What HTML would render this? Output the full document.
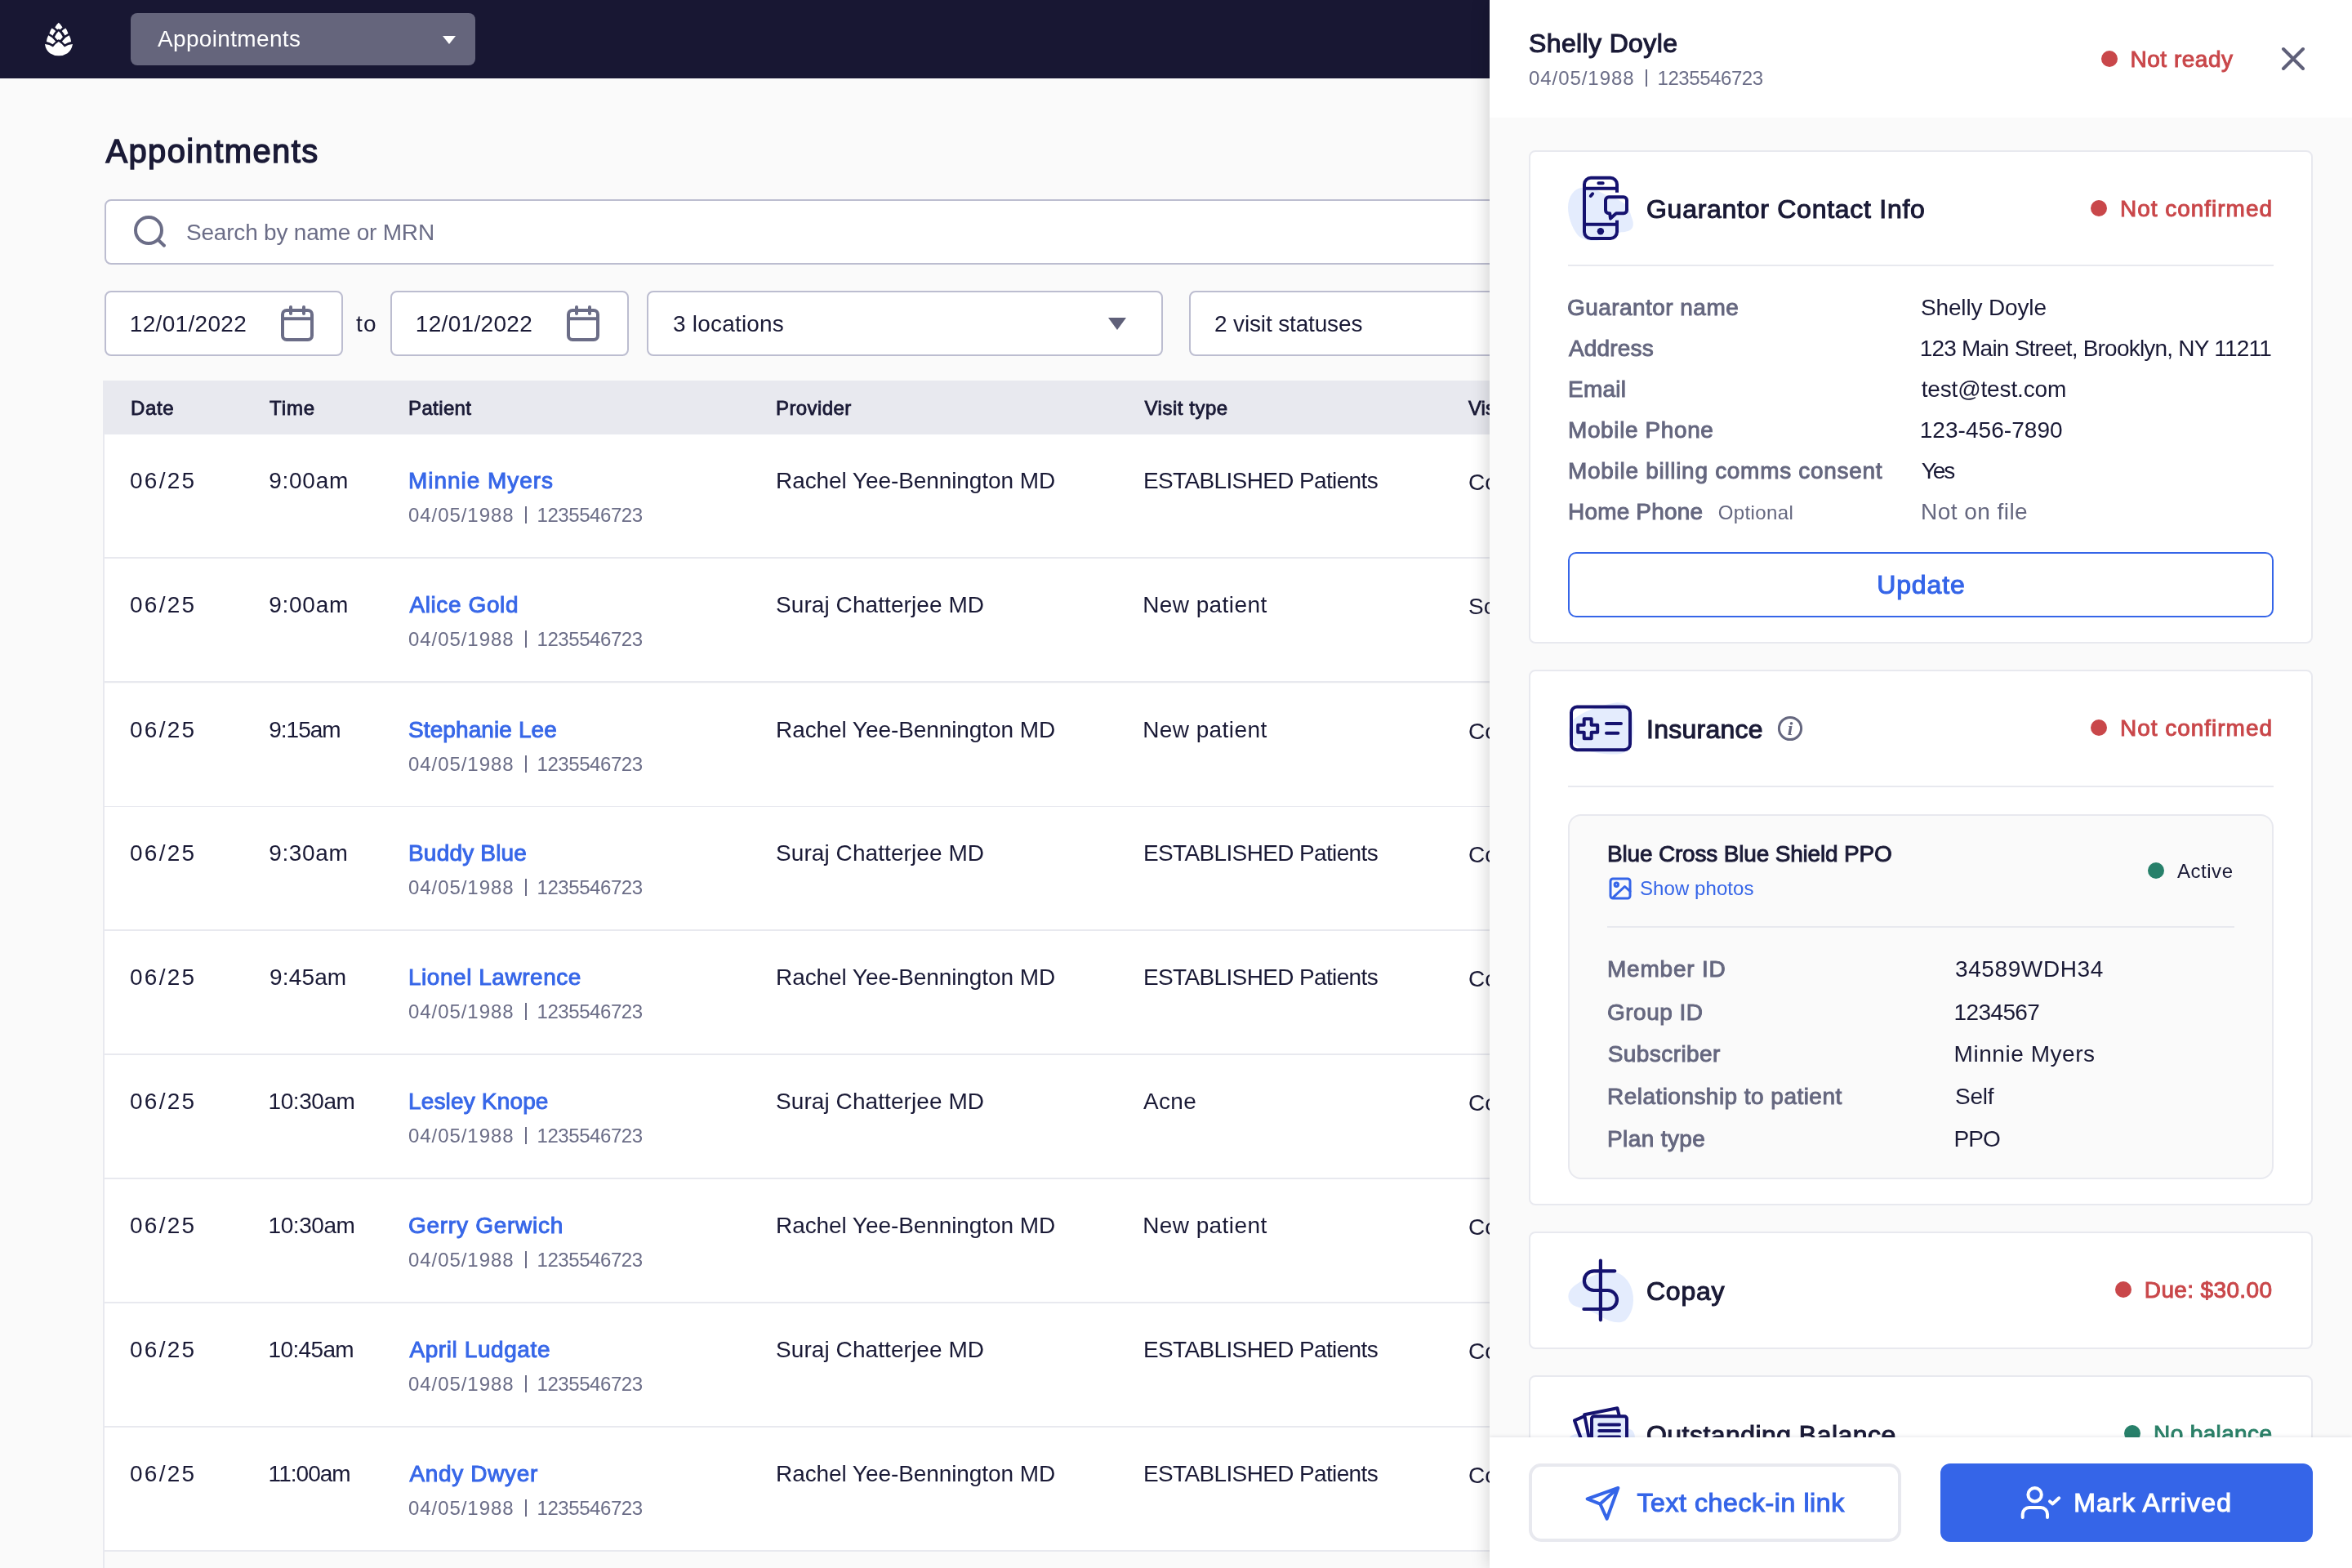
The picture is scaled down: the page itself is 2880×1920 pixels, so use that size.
<!DOCTYPE html>
<html lang="en">
<head>
<meta charset="utf-8">
<title>Appointments</title>
<style>
*{box-sizing:border-box;margin:0;padding:0}
html,body{width:2880px;height:1920px;overflow:hidden;background:#fafafa}
body{font-family:"Liberation Sans",Arial,sans-serif;font-size:28px;color:#1a1a36;position:relative;-webkit-font-smoothing:antialiased}
.abs{position:absolute}
b,.b,.m{font-weight:400;-webkit-text-stroke:0.034em currentColor}
/* nav */
#nav{position:absolute;left:0;top:0;width:2880px;height:96px;background:#181733}
#navsel{position:absolute;left:160px;top:16px;width:422px;height:64px;border-radius:8px;background:#65657c;color:#fff;font-size:28px;line-height:64px;padding-left:33px;overflow:hidden}
#navsel i{position:absolute;left:382px;top:28px;width:0;height:0;border-left:8px solid transparent;border-right:8px solid transparent;border-top:10px solid #fff}
/* main */
h1{position:absolute;left:128px;top:159px;font-size:40px;line-height:52px;font-weight:400;-webkit-text-stroke:0.034em currentColor;color:#1a1a36}
.inp{position:absolute;height:80px;border:2px solid #bcbdd0;border-radius:8px;background:#fff;line-height:78px;font-size:28px;padding-left:30px;white-space:nowrap;overflow:hidden}
#search{left:128px;top:244px;width:1800px;color:#6b6d87;padding-left:98px}
.caret{position:absolute;width:0;height:0;border-left:11px solid transparent;border-right:11px solid transparent;border-top:15px solid #5f6079}
/* table */
#tbl{position:absolute;left:126px;top:466px;width:1800px;height:1500px;border-left:2px solid #e8e9ef;background:#fafafa}
#thead{position:absolute;left:-2px;top:0;width:1800px;height:66px;background:#e8e9ef;font-size:24px;font-weight:400;-webkit-text-stroke:0.034em currentColor;line-height:67px;overflow:hidden}
#thead>span{position:absolute;top:0}
.row{position:absolute;left:0;width:1800px;height:152px;background:#fff;border-bottom:2px solid #e8e9ef}
.row>span{position:absolute;top:37px;line-height:40px;white-space:nowrap}
.row .c1{left:32px}.row .c2{left:202px}.row .c3{left:372px;color:#3767e8;font-weight:400;-webkit-text-stroke:0.034em currentColor}
.row .c4{left:822px}.row .c5{left:1272px}.row .c6{left:1670px;top:39px}
.row .sub{left:372px;top:81px;font-size:24px;line-height:36px;color:#6b6d87}
.sep{display:inline-block;width:2px;height:21px;background:#6b6d87;vertical-align:-2px;margin:0 13px 0 13px}
/* panel */
#panel{position:absolute;left:1824px;top:0;width:1056px;height:1920px;background:#fafafa;box-shadow:0 0 22px rgba(0,0,0,.2);overflow:hidden}
#phead{position:absolute;left:0;top:0;width:1056px;height:144px;background:#fff}
.card{position:absolute;left:48px;width:960px;background:#fff;border:2px solid #e8e9ef;border-radius:8px}
.ctitle{position:absolute;left:142px;font-size:32px;font-weight:400;-webkit-text-stroke:0.034em currentColor;line-height:40px;white-space:nowrap}
.stat{position:absolute;right:48px;font-size:28px;font-weight:400;-webkit-text-stroke:0.034em currentColor;line-height:40px;white-space:nowrap;color:#c9474a}
.dot{display:inline-block;width:20px;height:20px;border-radius:50%;background:#c9474a;margin-right:16px;vertical-align:0}
.green{color:#2b8068}.green .dot,.dot.g{background:#27806a}
.hr{position:absolute;left:46px;width:864px;height:2px;background:#e8e9ef}
.lab{position:absolute;left:46px;font-weight:400;-webkit-text-stroke:0.034em currentColor;color:#65677f;line-height:40px;white-space:nowrap}
.val{position:absolute;left:478px;line-height:40px;white-space:nowrap}
#pfoot{position:absolute;left:0;top:1760px;width:1056px;height:160px;background:#fff;box-shadow:0 -1px 4px rgba(24,23,51,.10)}
.btn{position:absolute;top:32px;width:456px;height:96px;border-radius:12px;font-size:32px;font-weight:400;-webkit-text-stroke:0.034em currentColor;line-height:96px;white-space:nowrap}
.opt{font-weight:400;-webkit-text-stroke:0;font-size:24px;margin-left:17px}
.upd{position:absolute;left:46px;top:490px;width:864px;height:80px;border:2px solid #3565e8;border-radius:10px;color:#3565e8;font-size:32px;font-weight:400;-webkit-text-stroke:0.034em currentColor;text-align:center;line-height:76px}
.ibox{position:absolute;left:46px;top:175px;width:864px;height:447px;border:2px solid #e8e9ef;border-radius:16px;background:#fafafa}
.v2{left:472px}
@media (max-width:1600px){html{zoom:.5}}
</style>
</head>
<body style="will-change:transform">
<div id="nav">
<svg class="abs" style="left:40px;top:16px" width="64" height="64" viewBox="0 0 64 64" fill="#fff">
<path d="M31.8 11.8Q34.6 14 36.5 17.6L33.7 20.2L31.8 19.2L30.2 20.2L27.3 17.6Q29.2 14 31.8 11.8Z"/>
<path d="M23.5 18.4Q26 19.6 28.2 22Q26 24.6 24.5 27.8Q22.6 26 20.4 24.9Q21.4 21 23.5 18.4Z"/>
<path d="M40.4 18.4Q37.8 19.6 35.7 22Q38 24.6 39.4 27.4Q41.4 26 43.5 24.9Q42.4 21 40.4 18.4Z"/>
<path d="M31.8 22.2Q35.2 25 36.9 29.2L33.7 33.1L31.8 32.2L30.2 33.1L26.9 29.2Q28.6 25 31.8 22.2Z"/>
<path d="M19.2 27.3Q24.6 29.6 28.2 34.7L24.5 38.2Q21 36 16.9 35.1Q17.4 30.6 19.2 27.3Z"/>
<path d="M44.7 27.3Q39.4 29.6 35.9 34.7L39.4 38.2Q43 36 47.1 35.1Q46.6 30.6 44.7 27.3Z"/>
<path d="M14.9 38Q20.6 38.4 24.9 41.6Q27.8 37.6 31.8 35.1Q36 37.6 39 41.6Q43.4 38.4 49 38Q47.6 45.6 42.6 49.2Q37.6 52.4 31.9 52.2Q26.2 52.4 21.2 49.2Q16.2 45.6 14.9 38Z"/>
</svg>
<div id="navsel"><span style="letter-spacing:0.34px">Appointments</span><i></i></div>
</div>

<h1><span style="letter-spacing:1.38px;margin-left:1.4px">Appointments</span></h1>

<div class="inp" id="search"><span style="letter-spacing:-0.2px">Search by name or MRN</span><svg class="abs" style="left:30px;top:14px" width="48" height="48" viewBox="0 0 48 48" fill="none" stroke="#6b6d87" stroke-width="4" stroke-linecap="round"><circle cx="22" cy="22" r="16"/><path d="M33.5 33.5L41 40.7"/></svg>
</div>

<div class="inp" style="left:128px;top:356px;width:292px"><span style="letter-spacing:0.31px;margin-left:-1.2px">12/01/2022</span><svg class="abs" style="left:210px;top:12px" width="48" height="52" viewBox="0 0 48 52" fill="none" stroke="#6b6d87" stroke-width="4" stroke-linecap="round"><rect x="6" y="10" width="36" height="36" rx="5"/><path d="M6 20.3H42M16 6V14M32 6V14"/></svg>
</div>
<div class="abs" style="left:436px;top:357px;line-height:80px;font-size:28px"><span style="letter-spacing:1.1px">to</span></div>
<div class="inp" style="left:478px;top:356px;width:292px"><span style="letter-spacing:0.31px;margin-left:-1.2px">12/01/2022</span><svg class="abs" style="left:210px;top:12px" width="48" height="52" viewBox="0 0 48 52" fill="none" stroke="#6b6d87" stroke-width="4" stroke-linecap="round"><rect x="6" y="10" width="36" height="36" rx="5"/><path d="M6 20.3H42M16 6V14M32 6V14"/></svg>
</div>
<div class="inp" style="left:792px;top:356px;width:632px"><span style="letter-spacing:0.2px">3 locations</span><i class="caret" style="left:563px;top:31px"></i></div>
<div class="inp" style="left:1456px;top:356px;width:500px"><span style="letter-spacing:-0.15px;margin-left:-1px">2 visit statuses</span></div>

<div id="tbl">
<div id="thead"><span style="left:34px"><span style="letter-spacing:0.67px">Date</span></span><span style="left:204px"><span style="letter-spacing:0.9px">Time</span></span><span style="left:374px"><span style="letter-spacing:0.38px">Patient</span></span><span style="left:824px"><span style="letter-spacing:0.4px">Provider</span></span><span style="left:1274px"><span style="letter-spacing:0.53px;margin-left:1.5px">Visit type</span></span><span style="left:1672px">Visit status</span></div>
<div class="row" style="top:66px"><span class="c1"><span style="letter-spacing:2.27px;margin-left:-1px">06/25</span></span><span class="c2"><span style="letter-spacing:0.74px;margin-left:-0.8px">9:00am</span></span><span class="c3"><span style="letter-spacing:0.95px">Minnie Myers</span></span><span class="sub"><span style="letter-spacing:0.94px">04/05/1988</span><i class="sep"></i><span style="letter-spacing:-0.44px">1235546723</span></span><span class="c4"><span style="letter-spacing:-0.08px">Rachel Yee-Bennington MD</span></span><span class="c5"><span style="letter-spacing:-0.64px">ESTABLISHED Patients</span></span><span class="c6">Confirmed</span></div>
<div class="row" style="top:218px"><span class="c1"><span style="letter-spacing:2.27px;margin-left:-1px">06/25</span></span><span class="c2"><span style="letter-spacing:0.74px;margin-left:-0.8px">9:00am</span></span><span class="c3"><span style="letter-spacing:0.61px;margin-left:1.4px">Alice Gold</span></span><span class="sub"><span style="letter-spacing:0.94px">04/05/1988</span><i class="sep"></i><span style="letter-spacing:-0.44px">1235546723</span></span><span class="c4"><span style="letter-spacing:0.08px">Suraj Chatterjee MD</span></span><span class="c5"><span style="letter-spacing:0.41px;margin-left:-0.8px">New patient</span></span><span class="c6">Scheduled</span></div>
<div class="row" style="top:371px"><span class="c1"><span style="letter-spacing:2.27px;margin-left:-1px">06/25</span></span><span class="c2"><span style="letter-spacing:-0.98px;margin-left:-0.8px">9:15am</span></span><span class="c3"><span style="letter-spacing:0.1px">Stephanie Lee</span></span><span class="sub"><span style="letter-spacing:0.94px">04/05/1988</span><i class="sep"></i><span style="letter-spacing:-0.44px">1235546723</span></span><span class="c4"><span style="letter-spacing:-0.08px">Rachel Yee-Bennington MD</span></span><span class="c5"><span style="letter-spacing:0.41px;margin-left:-0.8px">New patient</span></span><span class="c6">Confirmed</span></div>
<div class="row" style="top:522px"><span class="c1"><span style="letter-spacing:2.27px;margin-left:-1px">06/25</span></span><span class="c2"><span style="letter-spacing:0.66px;margin-left:-0.8px">9:30am</span></span><span class="c3"><span style="letter-spacing:0.19px">Buddy Blue</span></span><span class="sub"><span style="letter-spacing:0.94px">04/05/1988</span><i class="sep"></i><span style="letter-spacing:-0.44px">1235546723</span></span><span class="c4"><span style="letter-spacing:0.08px">Suraj Chatterjee MD</span></span><span class="c5"><span style="letter-spacing:-0.64px">ESTABLISHED Patients</span></span><span class="c6">Confirmed</span></div>
<div class="row" style="top:674px"><span class="c1"><span style="letter-spacing:2.27px;margin-left:-1px">06/25</span></span><span class="c2"><span style="letter-spacing:0.16px">9:45am</span></span><span class="c3"><span style="letter-spacing:0.53px">Lionel Lawrence</span></span><span class="sub"><span style="letter-spacing:0.94px">04/05/1988</span><i class="sep"></i><span style="letter-spacing:-0.44px">1235546723</span></span><span class="c4"><span style="letter-spacing:-0.08px">Rachel Yee-Bennington MD</span></span><span class="c5"><span style="letter-spacing:-0.64px">ESTABLISHED Patients</span></span><span class="c6">Confirmed</span></div>
<div class="row" style="top:826px"><span class="c1"><span style="letter-spacing:2.27px;margin-left:-1px">06/25</span></span><span class="c2"><span style="letter-spacing:-0.45px;margin-left:-1.4px">10:30am</span></span><span class="c3"><span style="letter-spacing:0.16px">Lesley Knope</span></span><span class="sub"><span style="letter-spacing:0.94px">04/05/1988</span><i class="sep"></i><span style="letter-spacing:-0.44px">1235546723</span></span><span class="c4"><span style="letter-spacing:0.08px">Suraj Chatterjee MD</span></span><span class="c5"><span style="letter-spacing:0.3px">Acne</span></span><span class="c6">Confirmed</span></div>
<div class="row" style="top:978px"><span class="c1"><span style="letter-spacing:2.27px;margin-left:-1px">06/25</span></span><span class="c2"><span style="letter-spacing:-0.45px;margin-left:-1.4px">10:30am</span></span><span class="c3"><span style="letter-spacing:0.73px">Gerry Gerwich</span></span><span class="sub"><span style="letter-spacing:0.94px">04/05/1988</span><i class="sep"></i><span style="letter-spacing:-0.44px">1235546723</span></span><span class="c4"><span style="letter-spacing:-0.08px">Rachel Yee-Bennington MD</span></span><span class="c5"><span style="letter-spacing:0.41px;margin-left:-0.8px">New patient</span></span><span class="c6">Confirmed</span></div>
<div class="row" style="top:1130px"><span class="c1"><span style="letter-spacing:2.27px;margin-left:-1px">06/25</span></span><span class="c2"><span style="letter-spacing:-0.65px;margin-left:-1.4px">10:45am</span></span><span class="c3"><span style="letter-spacing:0.59px;margin-left:1.4px">April Ludgate</span></span><span class="sub"><span style="letter-spacing:0.94px">04/05/1988</span><i class="sep"></i><span style="letter-spacing:-0.44px">1235546723</span></span><span class="c4"><span style="letter-spacing:0.08px">Suraj Chatterjee MD</span></span><span class="c5"><span style="letter-spacing:-0.64px">ESTABLISHED Patients</span></span><span class="c6">Confirmed</span></div>
<div class="row" style="top:1282px"><span class="c1"><span style="letter-spacing:2.27px;margin-left:-1px">06/25</span></span><span class="c2"><span style="letter-spacing:-0.97px;margin-left:-1.4px">11:00am</span></span><span class="c3"><span style="letter-spacing:0.67px;margin-left:1.4px">Andy Dwyer</span></span><span class="sub"><span style="letter-spacing:0.94px">04/05/1988</span><i class="sep"></i><span style="letter-spacing:-0.44px">1235546723</span></span><span class="c4"><span style="letter-spacing:-0.08px">Rachel Yee-Bennington MD</span></span><span class="c5"><span style="letter-spacing:-0.64px">ESTABLISHED Patients</span></span><span class="c6">Confirmed</span></div>
</div>

<div id="panel">
<div class="card" style="top:184px;height:604px">
<svg class="abs" style="left:42px;top:22px" width="88" height="92" viewBox="0 0 88 92" fill="none" stroke="#15126f" stroke-width="4">
<path d="M20 22C32 20 44 27 50 30.5C58 33 68 37 74 42C79 47 80 52 81.5 57C84 63 85 68 82 72C79 76 72 76 68 76.5C62 78 60 82 50 85C38 88 24 88 16 80C8 70 4 56 4 46C4 32 12 23 20 22Z" fill="#e4ecfd" stroke="none"/>
<path d="M64 27.8V17.7a8 8 0 0 0-8-8H32a8 8 0 0 0-8 8V76a8 8 0 0 0 8 8H56a8 8 0 0 0 8-8V61.8M24 22.8H64M24 66.8H64"/>
<path d="M41.4 16.3H46.7M34.1 29.3L31.8 32" stroke-linecap="round"/>
<circle cx="43.9" cy="75.2" r="4.2" fill="#15126f" stroke="none"/>
<path d="M54 33.2H72a4 4 0 0 1 4 4V49.3a4 4 0 0 1-4 4H63L56 59.6L55.2 53.3H54a4 4 0 0 1-4-4V37.2a4 4 0 0 1 4-4Z" stroke-linejoin="round"/>
</svg>
<div class="ctitle" style="top:50px"><span style="letter-spacing:0.73px">Guarantor Contact Info</span></div>
<div class="stat" style="top:50px"><i class="dot"></i><span style="letter-spacing:0.97px;margin-right:-0.97px">Not confirmed</span></div>
<div class="hr" style="top:138px"></div>
<div class="lab" style="top:171px"><span style="letter-spacing:0.45px;margin-left:-1px">Guarantor name</span></div><div class="val" style="top:171px"><span style="letter-spacing:-0.15px">Shelly Doyle</span></div>
<div class="lab" style="top:221px"><span style="letter-spacing:0.17px;margin-left:1px">Address</span></div><div class="val" style="top:221px"><span style="letter-spacing:-0.78px;margin-left:-1.3px">123 Main Street, Brooklyn, NY 11211</span></div>
<div class="lab" style="top:271px"><span style="letter-spacing:0.23px">Email</span></div><div class="val" style="top:271px"><span style="letter-spacing:-0.15px;margin-left:0.7px">test@test.com</span></div>
<div class="lab" style="top:321px"><span style="letter-spacing:0.61px">Mobile Phone</span></div><div class="val" style="top:321px"><span style="letter-spacing:0.05px;margin-left:-1.3px">123-456-7890</span></div>
<div class="lab" style="top:371px"><span style="letter-spacing:0.7px">Mobile billing comms consent</span></div><div class="val" style="top:371px"><span style="letter-spacing:-2.0px;margin-left:0.7px">Yes</span></div>
<div class="lab" style="top:421px"><span style="letter-spacing:0.18px">Home Phone</span><span class="opt"><span style="letter-spacing:0.36px;margin-left:1.6px">Optional</span></span></div><div class="val" style="top:421px;color:#65677f"><span style="letter-spacing:0.46px">Not on file</span></div>
<div class="upd"><span style="letter-spacing:0.9px;margin-right:-0.9px">Update</span></div>
</div>

<div class="card" style="top:820px;height:656px">
<svg class="abs" style="left:42px;top:34px" width="88" height="72" viewBox="0 0 88 72" fill="none" stroke="#15126f" stroke-width="4" stroke-linecap="round" stroke-linejoin="round">
<path d="M5 42C5 34 8 27 12 24C22 16 40 8 62 4.5C72 3 80 8 82 16C85 28 85 44 82 54C80 62 74 67 64 67.5C52 68 36 66 24 62C14 58 5 52 5 42Z" fill="#e4ecfd" stroke="none"/>
<rect x="8" y="9.6" width="72" height="52.6" rx="7"/>
<path d="M23.7 24.2h9v7.5h7.5v9h-7.5v7.5h-9v-7.5h-7.5v-9h7.5ZM51 30.1H69M51 41.7H65.3"/>
</svg>
<div class="ctitle" style="top:51px"><span style="letter-spacing:0.26px">Insurance</span></div>
<svg class="abs" style="left:300px;top:52px" width="36" height="36" viewBox="0 0 36 36"><circle cx="18" cy="18" r="13.6" fill="none" stroke="#65677f" stroke-width="3"/><text x="18" y="25.5" text-anchor="middle" font-family="Liberation Serif,serif" font-style="italic" font-weight="700" font-size="24" fill="#65677f">i</text></svg>
<div class="stat" style="top:50px"><i class="dot"></i><span style="letter-spacing:0.97px;margin-right:-0.97px">Not confirmed</span></div>
<div class="hr" style="top:140px"></div>
<div class="ibox">
<div class="abs b" style="left:46px;top:27px;line-height:40px;white-space:nowrap"><span style="letter-spacing:-0.18px">Blue Cross Blue Shield PPO</span></div>
<svg class="abs" style="left:46px;top:73px" width="32" height="32" viewBox="0 0 32 32" fill="none" stroke="#3565e8" stroke-width="3" stroke-linecap="round" stroke-linejoin="round"><rect x="4" y="4" width="24" height="24" rx="3"/><circle cx="11.3" cy="11.3" r="2.2"/><path d="M7.5 26.6L21.5 13.5L28 19.4"/></svg>
<div class="abs" style="left:86px;top:71px;font-size:24px;line-height:36px;color:#3565e8;white-space:nowrap"><span style="letter-spacing:0.07px">Show photos</span></div>
<div class="abs" style="right:48px;top:48px;font-size:24px;line-height:40px;white-space:nowrap"><i class="dot g" style="margin-right:16px;vertical-align:-1px"></i><span style="letter-spacing:0.54px;margin-right:-0.54px">Active</span></div>
<div class="hr" style="top:135px;width:768px"></div>
<div class="lab" style="top:168px"><span style="letter-spacing:0.79px">Member ID</span></div><div class="val v2" style="top:168px"><span style="letter-spacing:0.6px">34589WDH34</span></div>
<div class="lab" style="top:221px"><span style="letter-spacing:0.49px">Group ID</span></div><div class="val v2" style="top:221px"><span style="letter-spacing:-0.62px;margin-left:-1.4px">1234567</span></div>
<div class="lab" style="top:272px"><span style="letter-spacing:0.43px;margin-left:0.7px">Subscriber</span></div><div class="val v2" style="top:272px"><span style="letter-spacing:0.54px;margin-left:-1.4px">Minnie Myers</span></div>
<div class="lab" style="top:324px"><span style="letter-spacing:0.46px">Relationship to patient</span></div><div class="val v2" style="top:324px"><span style="letter-spacing:-0.23px">Self</span></div>
<div class="lab" style="top:376px"><span style="letter-spacing:0.39px">Plan type</span></div><div class="val v2" style="top:376px"><span style="letter-spacing:-0.95px;margin-left:-1.4px">PPO</span></div>
</div>
</div>

<div class="card" style="top:1508px;height:144px">
<svg class="abs" style="left:42px;top:28px" width="88" height="86" viewBox="0 0 88 86" fill="none" stroke="#15126f" stroke-width="4.2" stroke-linecap="round">
<path d="M58 19C70 20 80 30 83 44C86 58 82 72 74 79C66 84 54 80 44 74C32 66 18 64 10 60C2 54 3 44 10 38C22 28 44 18 58 19Z" fill="#e4ecfd" stroke="none"/>
<path d="M43.9 5.6V78.3M61.3 18.3H35.7a11.85 11.85 0 0 0 0 23.7H52.5a11.5 11.5 0 0 1 0 23H23.4"/>
</svg>
<div class="ctitle" style="top:51px"><span style="letter-spacing:0.75px">Copay</span></div>
<div class="stat" style="top:50px"><i class="dot"></i><span style="letter-spacing:0.36px;margin-right:-0.36px">Due: $30.00</span></div>
</div>

<div class="card" style="top:1684px;height:300px">
<svg class="abs" style="left:42px;top:30px" width="88" height="74" viewBox="0 0 88 74" fill="none" stroke="#15126f" stroke-width="4" stroke-linecap="round" stroke-linejoin="round">
<path d="M3 52C3 44 8 40.5 16 39.5L76 33.5C83 33 86 38 86 46V74H3Z" fill="#e4ecfd" stroke="none"/>
<path d="M21.5 50L11.9 23.3L23 18.6"/>
<path d="M31.6 54L24.1 16.3L64.4 8.3L66.6 17"/>
<rect x="33" y="18.2" width="43" height="60" rx="3" fill="#e4ecfd"/>
<path d="M42.2 28.4H67M42.2 35.9H67M42.2 43.4H67"/>
</svg>
<div class="ctitle" style="top:51px"><span style="letter-spacing:0.45px">Outstanding Balance</span></div>
<div class="stat green" style="top:50px"><i class="dot"></i><span style="letter-spacing:0.36px;margin-right:-0.36px">No balance</span></div>
</div>

<div id="phead">
<div class="abs" style="left:48px;top:33px;font-size:32px;font-weight:400;-webkit-text-stroke:0.034em currentColor;line-height:40px"><span style="letter-spacing:0.37px">Shelly Doyle</span></div>
<div class="abs" style="left:48px;top:78px;font-size:24px;line-height:36px;color:#6b6d87;white-space:nowrap"><span style="letter-spacing:0.94px">04/05/1988</span><i class="sep"></i><span style="letter-spacing:-0.44px">1235546723</span></div>
<div class="stat" style="right:146px;top:53px"><i class="dot"></i><span style="letter-spacing:0.51px;margin-right:-0.51px">Not ready</span></div>
<svg class="abs" style="left:960px;top:48px" width="48" height="48" viewBox="0 0 48 48" fill="none" stroke="#5f6079" stroke-width="4" stroke-linecap="round"><path d="M12 12L36 36M36 12L12 36"/></svg>
</div>
<div id="pfoot">
<div class="btn" style="left:48px;border-radius:15px;border:4px solid #e8e9ef;color:#3565e8;background:#fff;line-height:88px">
<svg class="abs" style="left:63px;top:19px" width="52" height="52" viewBox="0 0 52 52" fill="none" stroke="#3565e8" stroke-width="4" stroke-linecap="round" stroke-linejoin="round"><path d="M42.3 7L4.6 20.3L20.4 26.6L28.6 44.8ZM20.4 26.6L42.3 7"/></svg>
<span class="abs" style="left:128.5px;top:0"><span style="letter-spacing:0.59px">Text check-in link</span></span></div>
<div class="btn" style="left:552px;background:#3565e8;color:#fff">
<svg class="abs" style="left:96px;top:20px" width="56" height="56" viewBox="0 0 56 56" fill="none" stroke="#fff" stroke-width="4" stroke-linecap="round" stroke-linejoin="round"><circle cx="19.6" cy="18.2" r="8.2"/><path d="M4.7 46V42a8 8 0 0 1 8-8h14.3a8 8 0 0 1 8 8v4M38 26.4L41.5 29.4L49.2 22.3"/></svg>
<span class="abs" style="left:165px;top:0"><span style="letter-spacing:1.2px;margin-left:-1.8px">Mark Arrived</span></span></div>

</div>
</div>
</body>
</html>
